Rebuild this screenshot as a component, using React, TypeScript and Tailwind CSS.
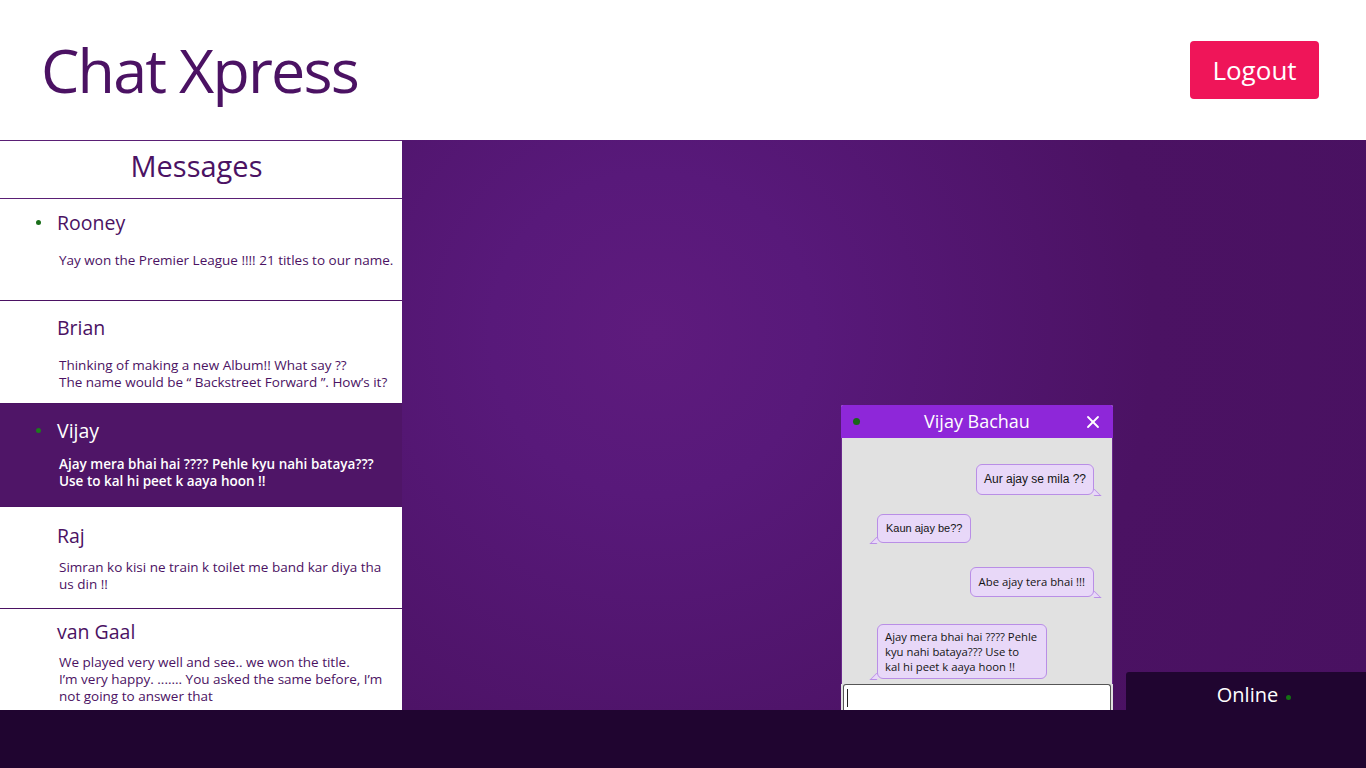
import { X } from "lucide-react";

const conversations = [
  {
    name: "Rooney",
    online: true,
    box: "h-[102px] pt-[10px]",
    gap: "mt-[16px]",
    lines: ["Yay won the Premier League !!!! 21 titles to our name."],
  },
  {
    name: "Brian",
    online: false,
    box: "h-[103px] pt-[13px]",
    gap: "mt-[16px]",
    lines: ["Thinking of making a new Album!! What say ??", "The name would be \u201c Backstreet Forward \u201d. How\u2019s it?"],
  },
  {
    name: "Vijay",
    online: true,
    active: true,
    box: "h-[103px] pt-[13px]",
    gap: "mt-[12px]",
    lines: ["Ajay mera bhai hai ???? Pehle kyu nahi bataya???", "Use to kal hi peet k aaya hoon !!"],
  },
  {
    name: "Raj",
    online: false,
    box: "h-[102px] pt-[15px]",
    gap: "mt-[10px]",
    lines: ["Simran ko kisi ne train k toilet me band kar diya tha us din !!"],
  },
  {
    name: "van Gaal",
    online: false,
    box: "flex-1 pt-[9px]",
    gap: "mt-[9px]",
    lines: ["We played very well and see.. we won the title.", "I\u2019m very happy. ....... You asked the same before, I\u2019m not going to answer that"],
  },
];

function Bubble({
  lines,
  mine,
  className,
}: {
  lines: string[];
  mine?: boolean;
  className: string;
}) {
  return (
    <div className={`flex ${mine ? "justify-end pr-[18px]" : "justify-start pl-[35px]"}`}>
      <div className="relative">
        <div
          className={`relative z-10 whitespace-nowrap rounded-[6px] border border-[#b98ee6] bg-[#e8d8f8] text-[#141414] ${className}`}
        >
          {lines.map((l) => (
            <div key={l}>{l}</div>
          ))}
        </div>
        <div
          className={`absolute bottom-[-1px] h-[7px] w-[7px] border-b border-[#b98ee6] bg-[#e8d8f8] ${
            mine ? "right-[-4px] skew-x-[45deg] border-r" : "left-[-4px] -skew-x-[45deg] border-l"
          }`}
        />
      </div>
    </div>
  );
}

export default function App() {
  return (
    <div className="flex h-[768px] w-[1366px] flex-col overflow-hidden bg-white font-['Open_Sans',sans-serif]">
      <header className="flex h-[140px] shrink-0 items-center justify-between pl-[41px] pr-[47px]">
        <h1 className="mt-[-2px] text-[61px] leading-none tracking-[-1.85px] text-[#4b1263]">Chat Xpress</h1>
        <button className="h-[58px] w-[129px] rounded-[4px] bg-[#ef1559] text-[26px] text-white">Logout</button>
      </header>

      <div className="relative flex flex-1">
        <aside className="flex w-[402px] shrink-0 flex-col bg-[#4b1263]">
          <div className="flex h-[59px] shrink-0 items-center justify-center border-y border-[#5a1f75] bg-white pb-[7px] pr-[9px]">
            <h2 className="text-[29px] text-[#4b1263]">Messages</h2>
          </div>
          {conversations.map((c) => (
            <div
              key={c.name}
              className={`flex shrink-0 flex-col border-b border-[#4b1263] pl-[59px] pr-[6px] last:border-b-0 ${c.box} ${
                c.active ? "bg-[#4f1567] text-white" : "bg-white text-[#4b1263]"
              }`}
            >
              <div className="relative ml-[-2px] flex items-center text-[19.5px] leading-[27px]">
                {c.online && (
                  <span
                    className={`absolute left-[-21px] top-[11px] h-[5px] w-[5px] rounded-full ${
                      c.active ? "bg-[#1e7a1e]" : "bg-[#1a6e1a]"
                    }`}
                  />
                )}
                {c.name}
              </div>
              <div className={`text-[13.5px] leading-[17px] ${c.active ? "font-semibold" : ""} ${c.gap}`}>
                {c.lines.map((l) => (
                  <div key={l}>{l}</div>
                ))}
              </div>
            </div>
          ))}
        </aside>

        <main className="flex-1 bg-[radial-gradient(circle_at_26%_34%,#5e1b7d_0%,#58197a_20%,#4b1263_62%,#491161_100%)]" />

        {/* floating chat window */}
        <div className="absolute bottom-0 left-[841px] flex h-[305px] w-[272px] flex-col overflow-hidden rounded-t-[2px] bg-[#e1e1e1]">
          <div className="relative flex h-[33px] shrink-0 items-center justify-center bg-[#8e27d9] text-[18px] text-white">
            <span className="absolute left-[12px] top-[13px] h-[7px] w-[7px] rounded-full bg-[#186618]" />
            Vijay Bachau
            <X className="absolute right-[10px] top-[7px] h-[20px] w-[20px]" strokeWidth={2.2} />
          </div>
          <div className="flex flex-1 flex-col border-x border-[#6a2a8c] pt-[26px]">
            <Bubble
              lines={["Aur ajay se mila ??"]}
              mine
              className="px-[7px] py-[7px] font-['Liberation_Sans',Arial,sans-serif] text-[12px] leading-[15px]"
            />
            <div className="mt-[19px]">
              <Bubble
                lines={["Kaun ajay be??"]}
                className="px-[8px] py-[6px] font-['Liberation_Sans',Arial,sans-serif] text-[11px] leading-[15px]"
              />
            </div>
            <div className="mt-[24px]">
              <Bubble
                lines={["Abe ajay tera bhai !!!"]}
                mine
                className="px-[8px] py-[6px] font-['Open_Sans',sans-serif] text-[11.3px] leading-[16px]"
              />
            </div>
            <div className="mt-[27px]">
              <Bubble
                lines={["Ajay mera bhai hai ???? Pehle", "kyu nahi bataya??? Use to", "kal hi peet k aaya hoon !!"]}
                className="w-[170px] px-[7px] py-[4px] font-['Open_Sans',sans-serif] text-[11.3px] leading-[15px]"
              />
            </div>
          </div>
          <div className="mx-[2px] flex h-[26px] shrink-0 items-center rounded-t-[3px] border border-b-0 border-[#555] bg-white pl-[3px]">
            <span className="h-[18px] w-px bg-[#222]" />
          </div>
        </div>

        <div className="absolute bottom-0 right-0 flex h-[38px] w-[240px] items-center justify-center rounded-tl-[3px] bg-[#200530] pl-[16px] pt-[8px] text-[20px] text-white">
          Online
          <span className="ml-[8px] mt-[4px] h-[5px] w-[5px] rounded-full bg-[#137013]" />
        </div>
      </div>

      <footer className="h-[58px] shrink-0 bg-[#200530]" />
    </div>
  );
}
